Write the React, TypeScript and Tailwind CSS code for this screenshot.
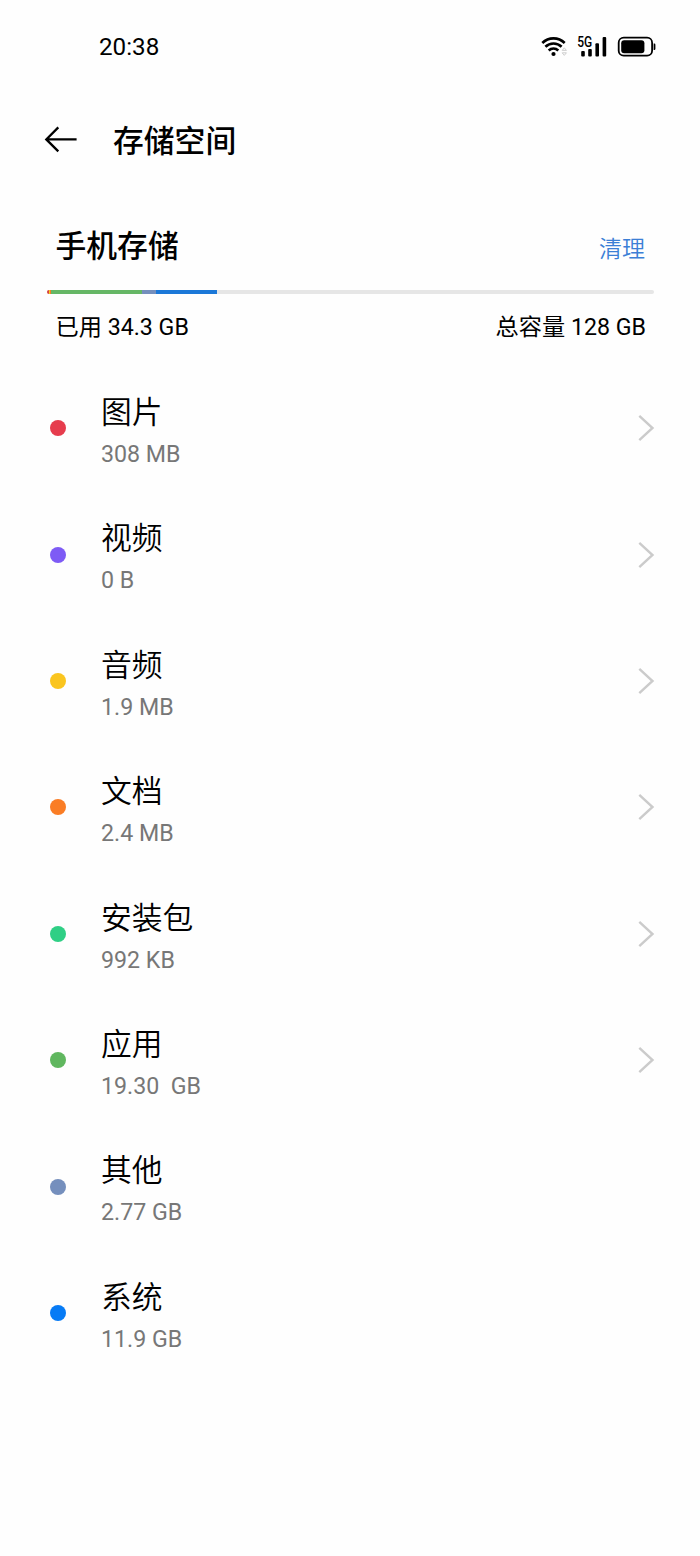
const categories = [
  { name: "图片", size: "308 MB", dot: "bg-[#e63c4d]", link: true },
  { name: "视频", size: "0 B", dot: "bg-[#7e5bf5]", link: true },
  { name: "音频", size: "1.9 MB", dot: "bg-[#fac51f]", link: true },
  { name: "文档", size: "2.4 MB", dot: "bg-[#fa7d25]", link: true },
  { name: "安装包", size: "992 KB", dot: "bg-[#2fcf85]", link: true },
  { name: "应用", size: "19.30  GB", dot: "bg-[#60b75f]", link: true },
  { name: "其他", size: "2.77 GB", dot: "bg-[#758fbd]", link: false },
  { name: "系统", size: "11.9 GB", dot: "bg-[#077bf5]", link: false },
];

const statusIcons = (
  <svg width="140" height="42" viewBox="0 0 140 42" fill="none">
    {/* Wi-Fi */}
    <g stroke="#000" strokeWidth="2.6">
      <path d="M12.3 17C18.6 10.8 28.4 10.8 34.7 17" />
      <path d="M15.4 20.8C20 16.3 27 16.3 31.6 20.8" />
      <path d="M18.7 24.5C21.4 21.9 25.6 21.9 28.3 24.5" />
    </g>
    <circle cx="23.5" cy="28" r="2.1" fill="#000" />
    <path d="M32.2 24.4L34.3 21.8L36.4 24.4ZM32.2 26.8L34.3 29.4L36.4 26.8Z" stroke="#c8c8c8" strokeWidth="0.9" />
    {/* Signal */}
    <text
      x="47.3"
      y="20.6"
      fontFamily="Roboto, sans-serif"
      fontSize="14"
      fontWeight="500"
      textLength="15"
      lengthAdjust="spacingAndGlyphs"
      fill="#000"
    >
      5G
    </text>
    <g fill="#000">
      <rect x="51.2" y="25" width="3.6" height="5.4" rx="1" />
      <rect x="58.2" y="23" width="3.6" height="7.4" rx="1" />
      <rect x="65.4" y="17.3" width="3.6" height="13.1" rx="1" />
      <rect x="72.6" y="11" width="3.6" height="19.4" rx="1" />
    </g>
    {/* Battery */}
    <rect x="88.7" y="11.7" width="33.4" height="18" rx="5" stroke="#000" strokeWidth="1.8" />
    <rect x="91.2" y="14.2" width="23.2" height="13" rx="3" fill="#000" />
    <path d="M123.6 17.6H124.4Q125.4 17.6 125.4 18.8V22.8Q125.4 24 124.4 24H123.6Z" fill="#000" />
  </svg>
);

const backIcon = (
  <svg
    className="shrink-0"
    width="34"
    height="30"
    viewBox="0 0 34 30"
    fill="none"
    stroke="#000"
    strokeWidth="2.3"
  >
    <path d="M14.3 2.4L2.3 14.4L14.3 26.4M2.3 14.4H32.6" />
  </svg>
);

const chevronIcon = (
  <svg
    width="18"
    height="28"
    viewBox="0 0 18 28"
    fill="none"
    stroke="#cbcbcb"
    strokeWidth="2.4"
  >
    <path d="M2.3 1.8L15.5 14L2.3 26.2" />
  </svg>
);

export default function App() {
  return (
    <div className="w-[700px] h-[1556px] overflow-hidden bg-[#fefefe] text-black font-[Roboto,'Noto_Sans_CJK_SC',sans-serif]">
      {/* Status bar */}
      <div className="h-[94px] flex items-center justify-between pl-[99px] pr-[30px]">
        <span className="text-[24.2px] leading-none">20:38</span>
        {statusIcons}
      </div>

      {/* Title bar */}
      <header className="h-[91px] flex items-center pl-11 gap-[35px]">
        {backIcon}
        <h1 className="pt-[5px] text-[30.8px] leading-none font-medium">存储空间</h1>
      </header>

      {/* Usage summary */}
      <section className="pt-10 pl-[46.5px] pr-[46px]">
        <div className="h-[42px] flex items-center justify-between pl-[9px] pr-[9px]">
          <h2 className="pt-[3px] text-[30.8px] leading-none font-medium">手机存储</h2>
          <a href="#clean" className="mt-1.5 text-[23px] leading-none font-[350] text-[#3c7fd6]">
            清理
          </a>
        </div>
        <div className="mt-[23px] h-1 flex rounded-full overflow-hidden bg-[#e6e6e6]">
          <div className="w-[2px] bg-[#d8433f]" />
          <div className="w-[1px] bg-[#fac51f]" />
          <div className="w-[1px] bg-[#fa7d25]" />
          <div className="w-[91px] bg-[#66b766]" />
          <div className="w-[14px] bg-[#758fbd]" />
          <div className="w-[61px] bg-[#1b78d8]" />
        </div>
        <div className="mt-[20px] h-7 flex items-center justify-between pl-[9px] pr-[8px] text-[23.2px] leading-none">
          <span>已用 34.3 GB</span>
          <span>总容量 128 GB</span>
        </div>
      </section>

      {/* Categories */}
      <ul className="pt-[23px]">
        {categories.map((item) => (
          <li key={item.name} className="h-[126.4px] flex items-center pl-[50px] pr-[45px]">
            <span className={`size-4 rounded-full ${item.dot}`} />
            <div className="flex-1 ml-[35px] pt-[6.5px]">
              <p className="text-[30.8px] leading-[46px] font-[350]">{item.name}</p>
              <p className="text-[23.2px] leading-[37px] text-[#777777] whitespace-pre">{item.size}</p>
            </div>
            {item.link && chevronIcon}
          </li>
        ))}
      </ul>
    </div>
  );
}
